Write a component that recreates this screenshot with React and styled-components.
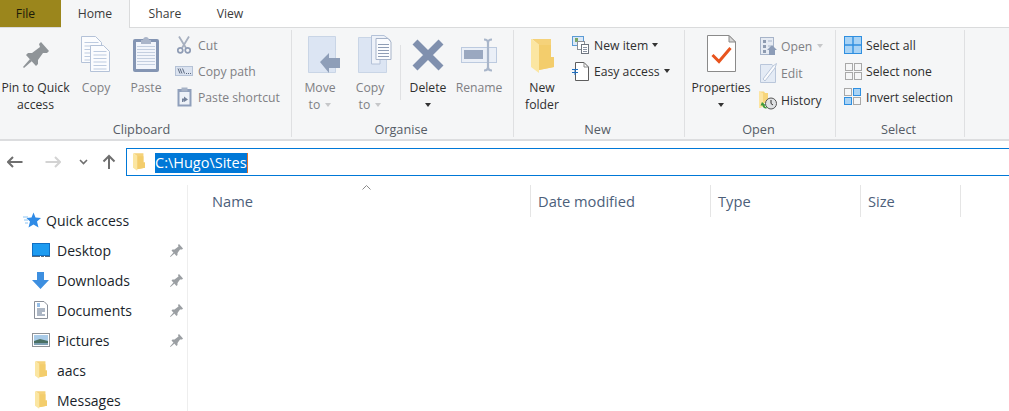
import React from 'react';
import styled, { createGlobalStyle } from 'styled-components';

const Global = createGlobalStyle`
  html, body { margin: 0; padding: 0; background: #fff; overflow: hidden; }
  body { font-family: "Open Sans", "Noto Sans", sans-serif; }
  svg { display: block; flex: none; }
`;

const Page = styled.div`
  width: 1009px;
  height: 411px;
  overflow: hidden;
  display: flex;
  flex-direction: column;
`;

/* tabs */
const TabBar = styled.div`
  height: 27px;
  display: flex;
  border-bottom: 1px solid #dadbdc;
  box-sizing: content-box;
`;
const Tab = styled.div`
  width: ${p => p.$w}px;
  height: ${p => (p.$active ? 28 : 27)}px;
  box-sizing: border-box;
  display: flex;
  align-items: center;
  justify-content: center;
  font-size: 12.2px;
  color: ${p => (p.$file ? '#1b1b0a' : '#3b3b3b')};
  background: ${p => (p.$file ? '#9b861c' : p.$active ? '#f5f6f7' : '#fff')};
  border-right: ${p => (p.$active ? '1px solid #dadbdc' : 'none')};
  padding-bottom: 1px;
  padding-right: ${p => (p.$file ? 10 : 0)}px;
`;

/* ribbon */
const Ribbon = styled.div`
  height: 111px;
  background: #f5f6f7;
  border-bottom: 2px solid #dcdddf;
  display: flex;
  box-sizing: content-box;
`;
const Group = styled.div`
  width: ${p => p.$w}px;
  box-sizing: border-box;
  margin: 2px 0 2px;
  border-right: 1px solid #dfe0e2;
  display: flex;
  flex-direction: column;
`;
const GroupBody = styled.div`
  flex: 1;
  display: flex;
  padding-left: ${p => p.$pl || 0}px;
`;
const GroupLabel = styled.div`
  height: 16px;
  text-align: center;
  font-size: 12.7px;
  line-height: 16px;
  color: #555c66;
  padding-right: ${p => p.$pr || 0}px;
`;
const BigButton = styled.div`
  width: ${p => p.$w}px;
  flex: none;
  display: flex;
  flex-direction: column;
  align-items: center;
  padding-top: ${p => p.$top || 5}px;
  font-size: 12.2px;
  line-height: 17px;
  text-align: center;
  white-space: nowrap;
  color: ${p => (p.$off ? '#7f8084' : '#2f2f2f')};
`;
const BigIcon = styled.div`
  margin-left: ${p => p.$dx || 0}px;
`;
const BigLabel = styled.div`
  margin-top: ${p => p.$mt || 6}px;
`;
const Caret = styled.span`
  display: inline-block;
  width: 0;
  height: 0;
  border-left: 3.5px solid transparent;
  border-right: 3.5px solid transparent;
  border-top: 4px solid ${p => (p.$off ? '#c6c7c9' : '#333')};
  margin-left: ${p => p.$ml ?? 4}px;
  vertical-align: 2px;
`;
const VSep = styled.div`
  width: 1px;
  height: 55px;
  margin: 15px 0 0 5px;
  flex: none;
  background: #e0e1e3;
`;
const SmallCol = styled.div`
  display: flex;
  flex-direction: column;
  margin-left: ${p => p.$ml || 0}px;
  padding-top: ${p => p.$top ?? 5}px;
  gap: ${p => p.$gap ?? 6}px;
`;
const SmallButton = styled.div`
  height: 20px;
  display: flex;
  align-items: center;
  gap: ${p => p.$gap ?? 5}px;
  font-size: 12.2px;
  white-space: nowrap;
  color: ${p => (p.$off ? '#7f8084' : '#2f2f2f')};
`;
const SmallIcon = styled.div`
  width: ${p => p.$w || 18}px;
  display: flex;
  justify-content: center;
`;

/* address bar */
const NavRow = styled.div`
  height: 28px;
  display: flex;
  align-items: center;
  padding: 7px 0 4px;
`;
const NavSlot = styled.div`
  width: ${p => p.$w}px;
  flex: none;
  display: flex;
  justify-content: center;
`;
const AddressBox = styled.div`
  flex: 1;
  height: 28px;
  box-sizing: border-box;
  border: 1px solid #0078d7;
  border-right: none;
  display: flex;
  align-items: center;
  padding-left: 6px;
  gap: 10px;
`;
const Selected = styled.span`
  background: #0078d7;
  color: #fff;
  font-size: 14.5px;
  line-height: 20px;
  margin-top: 1px;
  border-right: 1px solid #e0702a;
`;

/* body */
const Main = styled.div`
  flex: 1;
  display: flex;
  min-height: 0;
`;
const Sidebar = styled.div`
  width: 188px;
  box-sizing: border-box;
  margin-top: 5px;
  border-right: 1px solid #eeeeee;
  padding-top: 20px;
  display: flex;
  flex-direction: column;
`;
const NavItem = styled.div`
  height: 30px;
  flex: none;
  display: flex;
  align-items: center;
  padding-left: ${p => (p.$top ? 22 : 32)}px;
  padding-right: 4px;
  font-size: 14px;
  color: #1a1f2b;
`;
const NavIcon = styled.div`
  width: ${p => (p.$top ? 19 : 17)}px;
  margin-right: ${p => (p.$top ? 5 : 8)}px;
  display: flex;
  justify-content: center;
`;
const NavPin = styled.div`
  margin-left: auto;
`;
const Columns = styled.div`
  flex: 1;
  height: 32px;
  margin-top: 5px;
  display: flex;
  padding-left: 17px;
  position: relative;
`;
const Col = styled.div`
  width: ${p => p.$w}px;
  box-sizing: border-box;
  padding-left: 7px;
  border-right: 1px solid #e5e5e5;
  font-size: 14.67px;
  line-height: 32px;
  color: #4c607a;
  flex: none;
`;
const SortMark = styled.svg`
  position: absolute;
  left: 174px;
  top: 0;
`;

const Folder = ({ w = 12, h = 18 }) => (
  <svg width={w} height={h} viewBox="0 0 23 34">
    <path d="M1 0H20V18H23V28L8 31V6Z" fill="#f5d27a" />
    <path d="M8 6H20V18H23V28L8 31Z" fill="#f3cd6c" />
    <path d="M0 0H1L8 6V34L0 28Z" fill="#fbe6a2" />
  </svg>
);

const Pin = ({ size = 26, color = '#8f9498' }) => (
  <svg width={size} height={size} viewBox="0 0 26 26">
    <path d="M18 0L26 9L24 11L20 11L15 18L15 22L13 24L3 13L5 11L9 11L17 5L16 2Z" fill={color} />
    <path d="M7 17L0 25L1 26L9 19Z" fill={color} />
  </svg>
);

const Sheet = ({ x, y, w, h, fold = 6, lines = 6 }) => (
  <g>
    <path d={`M${x} ${y}H${x + w - fold}L${x + w} ${y + fold}V${y + h}H${x}Z`} fill="#fbfcfe" stroke="#b4c2d8" />
    {Array.from({ length: lines }).map((_, i) => (
      <path key={i} d={`M${x + 3} ${y + 6 + i * 3.5}H${x + w - 3}`} stroke="#bdcbe0" />
    ))}
  </g>
);

const CopyIcon = () => (
  <svg width="32" height="38" viewBox="0 0 32 38">
    <Sheet x={1.5} y={1.5} w={20} h={26} />
    <Sheet x={10.5} y={10.5} w={19} h={26} lines={6} />
  </svg>
);

const PasteIcon = () => (
  <svg width="28" height="38" viewBox="0 0 28 38">
    <rect x="1" y="4" width="26" height="33" rx="2" fill="#8495b3" />
    <rect x="4" y="7" width="20" height="27" fill="#f2f5fb" />
    {[11, 14, 17, 20, 23, 26, 29].map(y => <path key={y} d={`M5 ${y + 0.5}H23`} stroke="#c4cfe0" />)}
    <path d="M9 5H11C11 1 17 1 17 5H19V9H9Z" fill="#aab5c9" />
  </svg>
);

const CutIcon = () => (
  <svg width="14" height="18" viewBox="0 0 14 18">
    <path d="M2 0.500L9 12M12 0.500L5 12" stroke="#a6afbf" strokeWidth="1.800" fill="none" />
    <circle cx="3.300" cy="14.300" r="2.500" fill="none" stroke="#8f9cb5" strokeWidth="1.700" />
    <circle cx="10.700" cy="14.300" r="2.500" fill="none" stroke="#8f9cb5" strokeWidth="1.700" />
  </svg>
);

const PathIcon = () => (
  <svg width="18" height="12" viewBox="0 0 18 12">
    <rect x="0.500" y="1.500" width="17" height="9" fill="#dbe3f0" stroke="#b5c2d6" />
    <path d="M3 3.500L5 8.500M5 3.500L7 8.500M7.500 3.500L9.500 8.500" stroke="#5d6a80" fill="none" />
    <path d="M11 8.500h1M13 8.500h1M15 8.500h1" stroke="#5d6a80" />
  </svg>
);

const ShortcutIcon = () => (
  <svg width="15" height="20" viewBox="0 0 15 20">
    <rect x="0.500" y="2" width="14" height="17.500" fill="#8f9fbb" />
    <rect x="2.500" y="5" width="10" height="12.500" fill="#eef2f8" />
    <rect x="4.500" y="0.500" width="6" height="4" fill="#a6b2c6" />
    <path d="M5 15V11.500H7V9.500L11 12.500L7 15V13.500H6.500V15Z" fill="#74829a" />
  </svg>
);

const MoveIcon = () => (
  <svg width="33" height="39" viewBox="0 0 33 39">
    <path d="M0.500 1.500H27.500V37.500H0.500Z" fill="#dce5f3" stroke="#c9d5e6" />
    <path d="M12 27L21 18V23H32V33H21V38Z" fill="#8e9eb8" />
  </svg>
);

const CopyToIcon = () => (
  <svg width="34" height="38" viewBox="0 0 34 38">
    <path d="M0.500 2.500H28.500V37.500H0.500Z" fill="#dce5f3" stroke="#c9d5e6" />
    <path d="M13.500 0.500H26L32 5V20H22V29H13.500Z" fill="#eef2f9" stroke="#b4c2d8" />
    <path d="M18 3.500H30L33 7V24.500H18Z" fill="#fbfcfe" stroke="#a6b3c9" />
    {[9, 12, 15, 18, 21].map(y => <path key={y} d={`M20 ${y + 0.5}H31`} stroke="#8f9db5" />)}
  </svg>
);

const DeleteIcon = () => (
  <svg width="32" height="32" viewBox="0 0 32 32">
    <path d="M3 3L29 29M29 3L3 29" stroke="#8090ae" strokeWidth="7" fill="none" />
  </svg>
);

const RenameIcon = () => (
  <svg width="37" height="34" viewBox="0 0 37 34">
    <rect x="0.500" y="9.500" width="35" height="15" fill="#eaeff7" stroke="#bccadf" />
    <rect x="3" y="12" width="19" height="9" fill="#9aa8c0" />
    <path d="M23 1.500C26 1.500 27 3 27 5V29C27 31 26 32.500 23 32.500M31 1.500C28 1.500 27 3 27 5M27 29C27 31 28 32.500 31 32.500" stroke="#a9b6ca" strokeWidth="2.200" fill="none" />
  </svg>
);

const NewItemIcon = () => (
  <svg width="17" height="18" viewBox="0 0 17 18">
    <rect x="0.500" y="0.500" width="11" height="9" fill="#dbe8f7" stroke="#5b9bd5" />
    <rect x="3" y="2" width="3" height="4" fill="#7aa867" />
    <rect x="5.500" y="5.500" width="7" height="8" fill="#fff" stroke="#8a8f98" />
    <rect x="9.500" y="8.500" width="7" height="9" fill="#fff" stroke="#6f7680" />
    <path d="M11 11.500h4M11 13.500h4M11 15.500h4" stroke="#8a93a3" />
  </svg>
);

const EasyIcon = () => (
  <svg width="17" height="19" viewBox="0 0 17 19">
    <path d="M3.500 0.500H12L16.500 5V18.500H3.500Z" fill="#fff" stroke="#5d5d5d" />
    <path d="M12 0.500V5H16.500" fill="none" stroke="#8a8a8a" />
    <path d="M0 7.500H6M0 10.500H6" stroke="#1f6fc0" />
    <path d="M3 7.500V13" stroke="#1f6fc0" />
  </svg>
);

const PropertiesIcon = () => (
  <svg width="29" height="37" viewBox="0 0 29 37">
    <path d="M0.500 0.500H22L28.500 7V36.500H0.500Z" fill="#fff" stroke="#8a8a8a" />
    <path d="M22 0.500V7H28.500Z" fill="#d6d6d6" stroke="#8a8a8a" />
    <path d="M5.500 20L12 26.500L23.500 13" stroke="#e8541e" strokeWidth="3" fill="none" />
  </svg>
);

const OpenIcon = () => (
  <svg width="17" height="18" viewBox="0 0 17 18">
    <rect x="0.500" y="0.500" width="13" height="17" fill="#e6ebf3" stroke="#a7b4c9" />
    <path d="M3 3h3v3H3zM3 8h3v3H3zM3 13h3v3H3z" fill="#8e9bb0" />
    <path d="M8 4h4M8 9h3" stroke="#a7b4c9" />
    <path d="M12 8L17 13H15V18H9V13H7Z" fill="#8c9cb7" />
  </svg>
);

const EditIcon = () => (
  <svg width="17" height="20" viewBox="0 0 17 20">
    <path d="M0.500 1.500H12L15.500 5V19.500H0.500Z" fill="#e4ebf5" stroke="#b9c6da" />
    <path d="M3 16L13 3L16.500 0.500L15 5L5 18Z" fill="#fafbfd" stroke="#b9c6da" />
  </svg>
);

const HistoryIcon = () => (
  <svg width="18" height="19" viewBox="0 0 18 19">
    <path d="M0 0.500H5L6 2H9V12H5V15.500L0 17Z" fill="#f7d57a" />
    <path d="M0 0.500L4 2V15.500L0 17Z" fill="#fde5a2" />
    <circle cx="12" cy="12.500" r="5.500" fill="#dfe1e3" stroke="#555" />
    <path d="M12 9V12.500L14 14" stroke="#333" fill="none" />
    <path d="M3 11L7 14.500H5.500C6 16 7 16.500 9 16.500C7 18.500 4 17.500 3.500 14.500H1.500Z" fill="#3f9a3a" />
  </svg>
);

const SelectAllIcon = () => (
  <svg width="18" height="18" viewBox="0 0 18 18">
    <rect x="0.500" y="0.500" width="17" height="17" fill="#a9d3f5" stroke="#2f8fe0" />
    <path d="M9 0V18M0 9H18" stroke="#2f8fe0" strokeWidth="1.400" />
  </svg>
);

const Cell = ({ x, y, on }) => (
  <rect x={x + 0.5} y={y + 0.5} width="7" height="7" fill={on ? '#a9d3f5' : 'none'} stroke={on ? '#2f8fe0' : '#a8a8a8'} />
);

const SelectNoneIcon = () => (
  <svg width="18" height="18" viewBox="0 0 18 18">
    <Cell x={1} y={1} /><Cell x={10} y={1} /><Cell x={1} y={10} /><Cell x={10} y={10} />
  </svg>
);

const InvertIcon = () => (
  <svg width="18" height="18" viewBox="0 0 18 18">
    <Cell x={0} y={0} /><Cell x={9} y={0} on /><Cell x={0} y={9} on /><Cell x={9} y={9} />
  </svg>
);

const NavArrow = ({ color, dir = 'left' }) => {
  const d = {
    left: 'M15.500 8H1M6 3L1 8L6 13',
    right: 'M0.500 8H15M10 3L15 8L10 13',
    up: 'M8 15V2M2.500 7.500L8 2L13.500 7.500',
  }[dir];
  return (
    <svg width="16" height="16" viewBox="0 0 16 16">
      <path d={d} stroke={color} strokeWidth="2" fill="none" />
    </svg>
  );
};

const QuickStar = () => (
  <svg width="18" height="16" viewBox="0 0 18 16">
    <path d="M10.500 0.500L12.500 5.500L18 6L14 9.500L15.500 15.500L10.500 12.500L5.500 15.500L7 9.500L3.500 6L8.500 5.500Z" fill="#2f8be6" />
    <path d="M0 5H5M1 8H5M2 11H5" stroke="#8cc4f3" />
  </svg>
);

const DesktopIcon = () => (
  <svg width="18" height="14" viewBox="0 0 18 14">
    <rect x="0.500" y="0.500" width="17" height="12" fill="#1d9bf0" stroke="#0f6fc4" />
    <path d="M0 13.500H18" stroke="#5a6b7c" strokeDasharray="8 1 3 1 5" />
  </svg>
);

const DownloadIcon = () => (
  <svg width="17" height="17" viewBox="0 0 17 17">
    <path d="M5 0H12V8H17L8.500 17L0 8H5Z" fill="#3d8fe0" />
  </svg>
);

const DocsIcon = () => (
  <svg width="14" height="18" viewBox="0 0 14 18">
    <path d="M0.500 0.500H10L13.500 4V17.500H0.500Z" fill="#fff" stroke="#8a8f98" />
    <path d="M3 3h3M3 5h3" stroke="#2f7fd0" />
    <path d="M3 8h8M3 10h8M3 12h5M3 14h8" stroke="#5a6f8a" />
  </svg>
);

const PicturesIcon = () => (
  <svg width="18" height="14" viewBox="0 0 18 14">
    <rect x="0.500" y="0.500" width="17" height="13" fill="#fff" stroke="#8f9398" />
    <rect x="2" y="2" width="14" height="6" fill="#a9cbe8" />
    <path d="M2 8L8 6L16 8V12H2Z" fill="#4a7063" />
    <path d="M2 10H16V12H2Z" fill="#7ea0b3" />
  </svg>
);

const navItems = [
  { name: 'Desktop', icon: <DesktopIcon />, pinned: true },
  { name: 'Downloads', icon: <DownloadIcon />, pinned: true },
  { name: 'Documents', icon: <DocsIcon />, pinned: true },
  { name: 'Pictures', icon: <PicturesIcon />, pinned: true },
  { name: 'aacs', icon: <Folder /> },
  { name: 'Messages', icon: <Folder /> },
];

const App = () => (
  <Page>
    <Global />
    <TabBar>
      <Tab $w={61} $file>File</Tab>
      <Tab $w={69} $active>Home</Tab>
      <Tab $w={70}>Share</Tab>
      <Tab $w={60}>View</Tab>
    </TabBar>
    <Ribbon>
      <Group $w={292}>
        <GroupBody>
          <BigButton $w={71} $top={12}><Pin /><BigLabel $mt={11}>Pin to Quick<br />access</BigLabel></BigButton>
          <BigButton $w={50} $off><CopyIcon /><BigLabel>Copy</BigLabel></BigButton>
          <BigButton $w={50} $off><PasteIcon /><BigLabel>Paste</BigLabel></BigButton>
          <SmallCol $ml={4}>
            <SmallButton $off><SmallIcon><CutIcon /></SmallIcon>Cut</SmallButton>
            <SmallButton $off><SmallIcon><PathIcon /></SmallIcon>Copy path</SmallButton>
            <SmallButton $off><SmallIcon><ShortcutIcon /></SmallIcon>Paste shortcut</SmallButton>
          </SmallCol>
        </GroupBody>
        <GroupLabel $pr={8}>Clipboard</GroupLabel>
      </Group>
      <Group $w={222}>
        <GroupBody $pl={3}>
          <BigButton $w={50} $off>
            <BigIcon $dx={8}><MoveIcon /></BigIcon>
            <BigLabel $mt={5}>Move<br />to <Caret $off $ml={2} /></BigLabel>
          </BigButton>
          <BigButton $w={50} $off>
            <BigIcon $dx={10}><CopyToIcon /></BigIcon>
            <BigLabel>Copy<br />to <Caret $off $ml={2} /></BigLabel>
          </BigButton>
          <VSep />
          <BigButton $w={54} $top={9}><DeleteIcon /><BigLabel $mt={8}>Delete<br /><Caret $ml={0} /></BigLabel></BigButton>
          <BigButton $w={48} $off $top={8}><RenameIcon /><BigLabel $mt={7}>Rename</BigLabel></BigButton>
        </GroupBody>
        <GroupLabel $pr={3}>Organise</GroupLabel>
      </Group>
      <Group $w={171}>
        <GroupBody>
          <BigButton $w={56} $top={9}><Folder w={23} h={34} /><BigLabel $mt={6}>New<br />folder</BigLabel></BigButton>
          <SmallCol $ml={2}>
            <SmallButton><SmallIcon $w={17}><NewItemIcon /></SmallIcon>New item <Caret $ml={-1} /></SmallButton>
            <SmallButton><SmallIcon $w={17}><EasyIcon /></SmallIcon>Easy access <Caret $ml={-1} /></SmallButton>
          </SmallCol>
        </GroupBody>
        <GroupLabel $pr={3}>New</GroupLabel>
      </Group>
      <Group $w={151}>
        <GroupBody>
          <BigButton $w={72}><PropertiesIcon /><BigLabel $mt={7}>Properties<br /><Caret $ml={0} /></BigLabel></BigButton>
          <SmallCol $ml={2} $top={6} $gap={7}>
            <SmallButton $off $gap={4}><SmallIcon><OpenIcon /></SmallIcon>Open <Caret $off $ml={1} /></SmallButton>
            <SmallButton $off $gap={4}><SmallIcon><EditIcon /></SmallIcon>Edit</SmallButton>
            <SmallButton $gap={4}><SmallIcon><HistoryIcon /></SmallIcon>History</SmallButton>
          </SmallCol>
        </GroupBody>
        <GroupLabel $pr={3}>Open</GroupLabel>
      </Group>
      <Group $w={129}>
        <GroupBody $pl={8}>
          <SmallCol>
            <SmallButton $gap={4}><SelectAllIcon />Select all</SmallButton>
            <SmallButton $gap={4}><SelectNoneIcon />Select none</SmallButton>
            <SmallButton $gap={4}><InvertIcon />Invert selection</SmallButton>
          </SmallCol>
        </GroupBody>
        <GroupLabel $pr={3}>Select</GroupLabel>
      </Group>
    </Ribbon>
    <NavRow>
      <NavSlot $w={30}><NavArrow color="#6f6f6f" dir="left" /></NavSlot>
      <NavSlot $w={46}><NavArrow color="#d3d3d3" dir="right" /></NavSlot>
      <NavSlot $w={15}>
        <svg width="9" height="6" viewBox="0 0 9 6"><path d="M1 1L4.500 4.500L8 1" stroke="#6f6f6f" strokeWidth="1.600" fill="none" /></svg>
      </NavSlot>
      <NavSlot $w={35}><NavArrow color="#6f6f6f" dir="up" /></NavSlot>
      <AddressBox>
        <Folder />
        <Selected>C:\Hugo\Sites</Selected>
      </AddressBox>
    </NavRow>
    <Main>
      <Sidebar>
        <NavItem $top>
          <NavIcon $top><QuickStar /></NavIcon>
          Quick access
        </NavItem>
        {navItems.map(item => (
          <NavItem key={item.name}>
            <NavIcon>{item.icon}</NavIcon>
            {item.name}
            {item.pinned && <NavPin><Pin size={13} color="#9b9fa3" /></NavPin>}
          </NavItem>
        ))}
      </Sidebar>
      <Columns>
        <Col $w={326}>Name</Col>
        <Col $w={180}>Date modified</Col>
        <Col $w={150}>Type</Col>
        <Col $w={100}>Size</Col>
        <SortMark width="9" height="5" viewBox="0 0 9 5">
          <path d="M0.500 4.500L4.500 0.500L8.500 4.500" stroke="#8a8a8a" fill="none" />
        </SortMark>
      </Columns>
    </Main>
  </Page>
);

export default App;
